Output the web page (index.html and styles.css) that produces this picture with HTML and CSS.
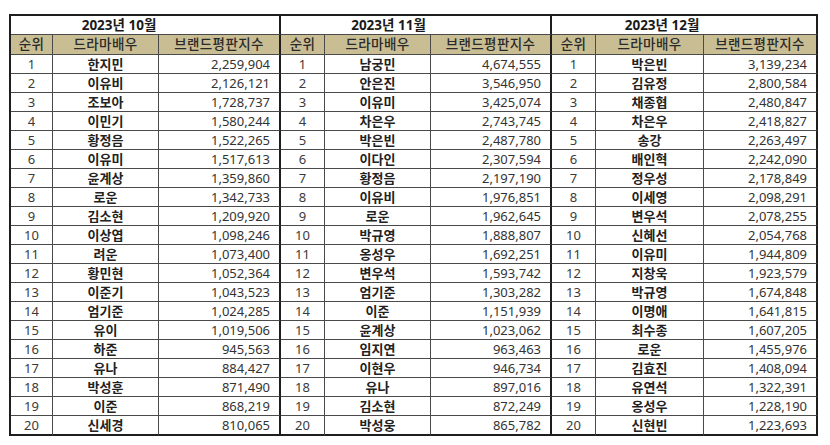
FILE: index.html
```html
<!DOCTYPE html>
<html lang="ko">
<head>
<meta charset="utf-8">
<link rel="stylesheet" href="styles.css">
</head>
<body>
<table class="rank">
<colgroup>
<col class="c-rank1"><col class="c-name1"><col class="c-score1">
<col class="c-rank"><col class="c-name"><col class="c-score2">
<col class="c-rank"><col class="c-name3"><col class="c-score3">
</colgroup>
<tr class="title-row">
<td colspan="3" class="title t1 gend">2023년 10월</td>
<td colspan="3" class="title t2 gend">2023년 11월</td>
<td colspan="3" class="title t3 gend">2023년 12월</td>
</tr>
<tr class="head-row">
<th>순위</th><th>드라마배우</th><th class="gend">브랜드평판지수</th>
<th>순위</th><th>드라마배우</th><th class="gend">브랜드평판지수</th>
<th>순위</th><th>드라마배우</th><th class="gend">브랜드평판지수</th>
</tr>
<tr><td class="n">1</td><td class="nm">한지민</td><td class="sc gend">2,259,904</td><td class="n">1</td><td class="nm">남궁민</td><td class="sc gend">4,674,555</td><td class="n">1</td><td class="nm">박은빈</td><td class="sc gend">3,139,234</td></tr>
<tr><td class="n">2</td><td class="nm">이유비</td><td class="sc gend">2,126,121</td><td class="n">2</td><td class="nm">안은진</td><td class="sc gend">3,546,950</td><td class="n">2</td><td class="nm">김유정</td><td class="sc gend">2,800,584</td></tr>
<tr><td class="n">3</td><td class="nm">조보아</td><td class="sc gend">1,728,737</td><td class="n">3</td><td class="nm">이유미</td><td class="sc gend">3,425,074</td><td class="n">3</td><td class="nm">채종협</td><td class="sc gend">2,480,847</td></tr>
<tr><td class="n">4</td><td class="nm">이민기</td><td class="sc gend">1,580,244</td><td class="n">4</td><td class="nm">차은우</td><td class="sc gend">2,743,745</td><td class="n">4</td><td class="nm">차은우</td><td class="sc gend">2,418,827</td></tr>
<tr><td class="n">5</td><td class="nm">황정음</td><td class="sc gend">1,522,265</td><td class="n">5</td><td class="nm">박은빈</td><td class="sc gend">2,487,780</td><td class="n">5</td><td class="nm">송강</td><td class="sc gend">2,263,497</td></tr>
<tr><td class="n">6</td><td class="nm">이유미</td><td class="sc gend">1,517,613</td><td class="n">6</td><td class="nm">이다인</td><td class="sc gend">2,307,594</td><td class="n">6</td><td class="nm">배인혁</td><td class="sc gend">2,242,090</td></tr>
<tr><td class="n">7</td><td class="nm">윤계상</td><td class="sc gend">1,359,860</td><td class="n">7</td><td class="nm">황정음</td><td class="sc gend">2,197,190</td><td class="n">7</td><td class="nm">정우성</td><td class="sc gend">2,178,849</td></tr>
<tr><td class="n">8</td><td class="nm">로운</td><td class="sc gend">1,342,733</td><td class="n">8</td><td class="nm">이유비</td><td class="sc gend">1,976,851</td><td class="n">8</td><td class="nm">이세영</td><td class="sc gend">2,098,291</td></tr>
<tr><td class="n">9</td><td class="nm">김소현</td><td class="sc gend">1,209,920</td><td class="n">9</td><td class="nm">로운</td><td class="sc gend">1,962,645</td><td class="n">9</td><td class="nm">변우석</td><td class="sc gend">2,078,255</td></tr>
<tr><td class="n">10</td><td class="nm">이상엽</td><td class="sc gend">1,098,246</td><td class="n">10</td><td class="nm">박규영</td><td class="sc gend">1,888,807</td><td class="n">10</td><td class="nm">신혜선</td><td class="sc gend">2,054,768</td></tr>
<tr><td class="n">11</td><td class="nm">려운</td><td class="sc gend">1,073,400</td><td class="n">11</td><td class="nm">옹성우</td><td class="sc gend">1,692,251</td><td class="n">11</td><td class="nm">이유미</td><td class="sc gend">1,944,809</td></tr>
<tr><td class="n">12</td><td class="nm">황민현</td><td class="sc gend">1,052,364</td><td class="n">12</td><td class="nm">변우석</td><td class="sc gend">1,593,742</td><td class="n">12</td><td class="nm">지창욱</td><td class="sc gend">1,923,579</td></tr>
<tr><td class="n">13</td><td class="nm">이준기</td><td class="sc gend">1,043,523</td><td class="n">13</td><td class="nm">엄기준</td><td class="sc gend">1,303,282</td><td class="n">13</td><td class="nm">박규영</td><td class="sc gend">1,674,848</td></tr>
<tr><td class="n">14</td><td class="nm">엄기준</td><td class="sc gend">1,024,285</td><td class="n">14</td><td class="nm">이준</td><td class="sc gend">1,151,939</td><td class="n">14</td><td class="nm">이명애</td><td class="sc gend">1,641,815</td></tr>
<tr><td class="n">15</td><td class="nm">유이</td><td class="sc gend">1,019,506</td><td class="n">15</td><td class="nm">윤계상</td><td class="sc gend">1,023,062</td><td class="n">15</td><td class="nm">최수종</td><td class="sc gend">1,607,205</td></tr>
<tr><td class="n">16</td><td class="nm">하준</td><td class="sc gend">945,563</td><td class="n">16</td><td class="nm">임지연</td><td class="sc gend">963,463</td><td class="n">16</td><td class="nm">로운</td><td class="sc gend">1,455,976</td></tr>
<tr><td class="n">17</td><td class="nm">유나</td><td class="sc gend">884,427</td><td class="n">17</td><td class="nm">이현우</td><td class="sc gend">946,734</td><td class="n">17</td><td class="nm">김효진</td><td class="sc gend">1,408,094</td></tr>
<tr><td class="n">18</td><td class="nm">박성훈</td><td class="sc gend">871,490</td><td class="n">18</td><td class="nm">유나</td><td class="sc gend">897,016</td><td class="n">18</td><td class="nm">유연석</td><td class="sc gend">1,322,391</td></tr>
<tr><td class="n">19</td><td class="nm">이준</td><td class="sc gend">868,219</td><td class="n">19</td><td class="nm">김소현</td><td class="sc gend">872,249</td><td class="n">19</td><td class="nm">옹성우</td><td class="sc gend">1,228,190</td></tr>
<tr class="last"><td class="n">20</td><td class="nm">신세경</td><td class="sc gend">810,065</td><td class="n">20</td><td class="nm">박성웅</td><td class="sc gend">865,782</td><td class="n">20</td><td class="nm">신현빈</td><td class="sc gend">1,223,693</td></tr>
</table>
</body>
</html>
```

FILE: styles.css
```css
html, body {
  margin: 0;
  background: #ffffff;
}
body {
  padding: 14px 0 0 9px;
  font-family: "Noto Sans", "Noto Sans CJK KR", sans-serif;
  color: #2e2e2e;
}
.rank {
  border-collapse: separate;
  border-spacing: 0;
  table-layout: fixed;
  width: 809px;
  border-top: 2px solid #1e1e1e;
  border-left: 2px solid #1e1e1e;
}
.c-rank1 { width: 42px; }
.c-name1 { width: 106px; }
.c-score1 { width: 122px; }
.c-rank { width: 44px; }
.c-name { width: 106px; }
.c-score2 { width: 121px; }
.c-name3 { width: 108px; }
.c-score3 { width: 114px; }

.rank td, .rank th {
  box-sizing: border-box;
  padding: 0;
  border-right: 1px solid #4a4a4a;
  border-bottom: 1px solid #4a4a4a;
  font-size: 13px;
  line-height: 18px;
  height: 19px;
  white-space: nowrap;
  overflow: hidden;
  vertical-align: middle;
}
.rank .gend {
  border-right: 2px solid #1e1e1e;
}
.title-row td {
  height: 19px;
  line-height: 17px;
  text-align: center;
  font-weight: 700;
  font-size: 13.5px;
  color: #1a1a1a;
}
.rank .title.t1 { padding-right: 52px; }
.rank .title.t2 { padding-right: 54px; }
.rank .title.t3 { padding-right: 44px; }

.head-row th {
  height: 20px;
  line-height: 19px;
  background: #c9bd93;
  font-weight: 500;
  font-size: 13.5px;
  letter-spacing: 0.4px;
  color: #2a2a2a;
  text-align: center;
}
.n {
  text-align: center;
  color: #3a3a3a;
}
.nm {
  text-align: center;
  font-family: "Noto Sans CJK KR", sans-serif;
  font-weight: 700;
  color: #222222;
}
.rank .sc {
  text-align: right;
  padding-right: 9px;
  color: #333333;
}
.last td {
  height: 20px;
  border-bottom: 2px solid #1e1e1e;
}
```
